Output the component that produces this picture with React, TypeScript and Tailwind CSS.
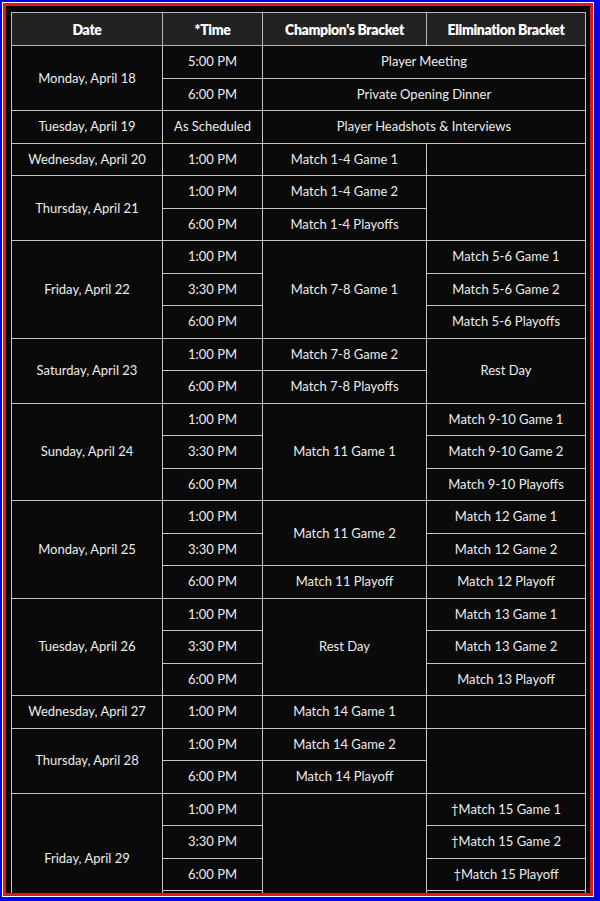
type Cell = { text?: string; rs?: number; cs?: number };

const rows: Cell[][] = [
  [{ text: "Monday, April 18", rs: 2 }, { text: "5:00 PM" }, { text: "Player Meeting", cs: 2 }],
  [{ text: "6:00 PM" }, { text: "Private Opening Dinner", cs: 2 }],
  [{ text: "Tuesday, April 19" }, { text: "As Scheduled" }, { text: "Player Headshots & Interviews", cs: 2 }],
  [{ text: "Wednesday, April 20" }, { text: "1:00 PM" }, { text: "Match 1-4 Game 1" }, {}],
  [{ text: "Thursday, April 21", rs: 2 }, { text: "1:00 PM" }, { text: "Match 1-4 Game 2" }, { rs: 2 }],
  [{ text: "6:00 PM" }, { text: "Match 1-4 Playoffs" }],
  [{ text: "Friday, April 22", rs: 3 }, { text: "1:00 PM" }, { text: "Match 7-8 Game 1", rs: 3 }, { text: "Match 5-6 Game 1" }],
  [{ text: "3:30 PM" }, { text: "Match 5-6 Game 2" }],
  [{ text: "6:00 PM" }, { text: "Match 5-6 Playoffs" }],
  [{ text: "Saturday, April 23", rs: 2 }, { text: "1:00 PM" }, { text: "Match 7-8 Game 2" }, { text: "Rest Day", rs: 2 }],
  [{ text: "6:00 PM" }, { text: "Match 7-8 Playoffs" }],
  [{ text: "Sunday, April 24", rs: 3 }, { text: "1:00 PM" }, { text: "Match 11 Game 1", rs: 3 }, { text: "Match 9-10 Game 1" }],
  [{ text: "3:30 PM" }, { text: "Match 9-10 Game 2" }],
  [{ text: "6:00 PM" }, { text: "Match 9-10 Playoffs" }],
  [{ text: "Monday, April 25", rs: 3 }, { text: "1:00 PM" }, { text: "Match 11 Game 2", rs: 2 }, { text: "Match 12 Game 1" }],
  [{ text: "3:30 PM" }, { text: "Match 12 Game 2" }],
  [{ text: "6:00 PM" }, { text: "Match 11 Playoff" }, { text: "Match 12 Playoff" }],
  [{ text: "Tuesday, April 26", rs: 3 }, { text: "1:00 PM" }, { text: "Rest Day", rs: 3 }, { text: "Match 13 Game 1" }],
  [{ text: "3:30 PM" }, { text: "Match 13 Game 2" }],
  [{ text: "6:00 PM" }, { text: "Match 13 Playoff" }],
  [{ text: "Wednesday, April 27" }, { text: "1:00 PM" }, { text: "Match 14 Game 1" }, {}],
  [{ text: "Thursday, April 28", rs: 2 }, { text: "1:00 PM" }, { text: "Match 14 Game 2" }, { rs: 2 }],
  [{ text: "6:00 PM" }, { text: "Match 14 Playoff" }],
  // the schedule runs on past the bottom of the frame, so Friday spans a fourth, clipped row
  [{ text: "Friday, April 29", rs: 4 }, { text: "1:00 PM" }, { rs: 4 }, { text: "\u2020Match 15 Game 1" }],
  [{ text: "3:30 PM" }, { text: "\u2020Match 15 Game 2" }],
  [{ text: "6:00 PM" }, { text: "\u2020Match 15 Playoff" }],
  [{ text: "" }, { text: "" }],
];

const headers = ["Date", "*Time", "Champion's Bracket", "Elimination Bracket"];

export default function App() {
  return (
    <div className="w-[600px] h-[901px] bg-[#0000ee] pl-[2px] pt-[2px] pr-[6px] pb-[4px]">
      <div className="h-full bg-white p-px">
        <div className="h-full bg-[#e01818] p-[3px]">
          <div className="h-full bg-[#060606] pl-[5px] pt-[6px] pr-[3px] overflow-hidden">
            <table
              className="w-[574px] border-collapse table-fixed text-[13px] text-[#ececec]"
              style={{ fontFamily: "Lato, 'Open Sans', sans-serif" }}
            >
              <colgroup>
                <col className="w-[151px]" />
                <col className="w-[100px]" />
                <col className="w-[164px]" />
                <col className="w-[159px]" />
              </colgroup>
              <thead>
                <tr className="h-[33px] bg-[#222222]">
                  {headers.map((h) => (
                    <th key={h} className="border border-[#b8b8b8] text-white text-[14px] font-extrabold px-1 tracking-tight">
                      {h}
                    </th>
                  ))}
                </tr>
              </thead>
              <tbody>
                {rows.map((r, i) => (
                  <tr key={i} className="h-[32.5px] bg-[#0a0a0a]">
                    {r.map((c, j) => (
                      <td
                        key={j}
                        rowSpan={c.rs}
                        colSpan={c.cs}
                        className="border border-[#c4c4c4] text-center p-0 leading-none whitespace-nowrap"
                      >
                        {c.text}
                      </td>
                    ))}
                  </tr>
                ))}
              </tbody>
            </table>
          </div>
        </div>
      </div>
    </div>
  );
}
